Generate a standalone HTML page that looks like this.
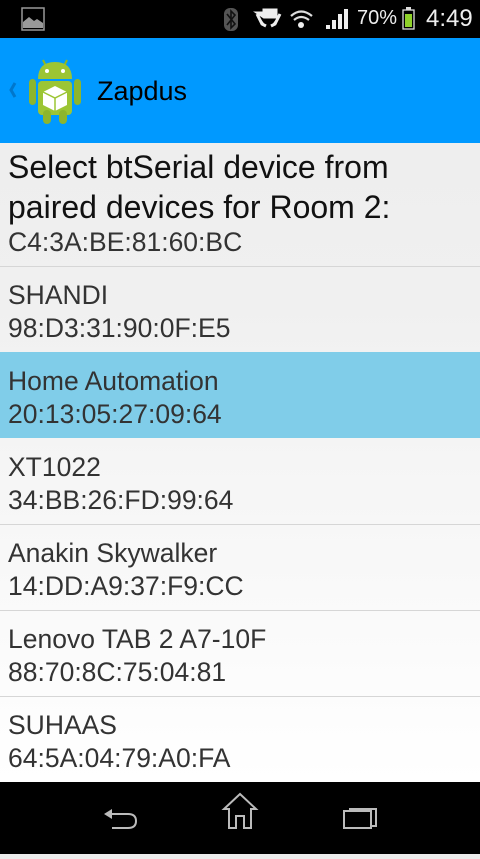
<!DOCTYPE html>
<html><head><meta charset="utf-8"><style>
*{margin:0;padding:0;box-sizing:border-box}
body{width:480px;height:854px;overflow:hidden;font-family:"Liberation Sans",sans-serif;background:linear-gradient(#ececec,#f0f0f0 300px,#fff 782px);position:relative}
.sb{position:absolute;top:0;left:0;width:480px;height:38px;background:#000;color:#ddd}
.ab{position:absolute;top:38px;left:0;width:480px;height:105px;background:#0099ff}
.t{position:absolute;left:8px;white-space:nowrap;line-height:1}
.h{font-size:32px;color:#111}
.m{font-size:26.5px;color:#333}
.sep{position:absolute;left:0;width:480px;height:1px;background:#d6d6d6}
.nb{position:absolute;top:782px;left:0;width:480px;height:72px;background:#000}
</style></head><body>
<div class="sb">
<svg width="480" height="38" style="position:absolute;left:0;top:0">
<rect x="22" y="8" width="22" height="22" fill="none" stroke="#999" stroke-width="1.5"/>
<path d="M23 28 L23 22 L29 17 L34 21 L37 19 L43 23 L43 28Z" fill="#999"/>
<rect x="224" y="8" width="14" height="23" rx="6" fill="#555"/>
<path d="M227 14 L235 24 L231 28 L231 11 L235 15 L227 25" fill="none" stroke="#111" stroke-width="1.6"/>
<path d="M258 13 L264 13 L264 10 L276 10 L276 17 L264 17Z M257 14 L262 24 L266 26 M280 14 L275 24 L271 26" fill="#eee" stroke="#eee" stroke-width="3"/>
<path d="M291 16 Q301 7 312 16 M294 20 Q301 14 309 20" fill="none" stroke="#ddd" stroke-width="2.2"/>
<circle cx="301" cy="25" r="3" fill="#eee"/>
<path d="M326 25h4v4h-4zM332 20h4v9h-4zM338 14h4v15h-4zM344 9h4v20h-4z" fill="#eee"/>
<rect x="403" y="10" width="11" height="19" fill="none" stroke="#ddd" stroke-width="1.3"/>
<rect x="406" y="7" width="5" height="3" fill="#ddd"/>
<rect x="405" y="14" width="7" height="13" fill="#8fd12a"/>
</svg>
<span style="position:absolute;left:357px;top:7px;font-size:20px;color:#eee">70%</span>
<span style="position:absolute;left:426px;top:5px;font-size:24px;color:#eee">4:49</span>
</div>
<div class="ab">
<svg width="90" height="105" style="position:absolute;left:0;top:0">
<path d="M15 45 L11 52 L15 59" fill="none" stroke="#0077cc" stroke-width="3"/>
<line x1="43" y1="22" x2="46" y2="28" stroke="#8fb822" stroke-width="2"/>
<line x1="67" y1="22" x2="64" y2="28" stroke="#8fb822" stroke-width="2"/>
<path d="M38 41 Q38 24 55 24 Q72 24 72 41Z" fill="#9cc534"/>
<circle cx="47" cy="33" r="2" fill="#fff"/><circle cx="63" cy="33" r="2" fill="#fff"/>
<rect x="38" y="43" width="34" height="34" rx="4" fill="#9cc534"/>
<rect x="29" y="41" width="7" height="26" rx="3.5" fill="#8db52c"/>
<rect x="74" y="41" width="7" height="26" rx="3.5" fill="#8db52c"/>
<rect x="43" y="72" width="8" height="14" rx="4" fill="#8db52c"/>
<rect x="59" y="72" width="8" height="14" rx="4" fill="#8db52c"/>
<path d="M55 48 L67 54 L67 67 L55 73 L43 67 L43 54Z" fill="#fff"/>
<path d="M43 54 L55 60 L67 54 M55 60 L55 73" fill="none" stroke="#9cc534" stroke-width="1.5"/>
</svg>
<span style="position:absolute;left:97px;top:38px;font-size:27px;color:#000">Zapdus</span>
</div>
<div class="t h" style="top:151px">Select btSerial device from</div>
<div class="t h" style="top:191px">paired devices for Room 2:</div>
<div class="t m" style="top:229px">C4:3A:BE:81:60:BC</div>
<div class="sep" style="top:266px"></div>
<div class="t m" style="top:282px">SHANDI</div>
<div class="t m" style="top:315px">98:D3:31:90:0F:E5</div>
<div style="position:absolute;top:352px;left:0;width:480px;height:86px;background:#80cde9"></div>
<div class="t m" style="top:368px">Home Automation</div>
<div class="t m" style="top:401px">20:13:05:27:09:64</div>
<div class="sep" style="top:524px"></div>
<div class="t m" style="top:454px">XT1022</div>
<div class="t m" style="top:487px">34:BB:26:FD:99:64</div>
<div class="t m" style="top:540px">Anakin Skywalker</div>
<div class="t m" style="top:573px">14:DD:A9:37:F9:CC</div>
<div class="sep" style="top:610px"></div>
<div class="t m" style="top:626px">Lenovo TAB 2 A7-10F</div>
<div class="t m" style="top:659px">88:70:8C:75:04:81</div>
<div class="sep" style="top:696px"></div>
<div class="t m" style="top:712px">SUHAAS</div>
<div class="t m" style="top:745px">64:5A:04:79:A0:FA</div>
<div class="nb">
<svg width="480" height="72">
<path d="M104 32 L112 27 L112 37Z" fill="#bbb"/>
<path d="M111 32 L128 32 Q136 32 136 39 Q136 46 128 46 L112 46" fill="none" stroke="#bbb" stroke-width="2"/>
<path d="M224 27 L240 12 L256 27 L251 27 L251 46 L244 46 L244 34 L236 34 L236 46 L229 46 L229 27Z" fill="none" stroke="#bbb" stroke-width="2"/>
<rect x="344" y="29" width="27" height="17" fill="none" stroke="#bbb" stroke-width="2"/>
<path d="M350 29 L350 27 L376 27 L376 44 L372 44" fill="none" stroke="#bbb" stroke-width="2"/>
</svg>
</div>
</body></html>
